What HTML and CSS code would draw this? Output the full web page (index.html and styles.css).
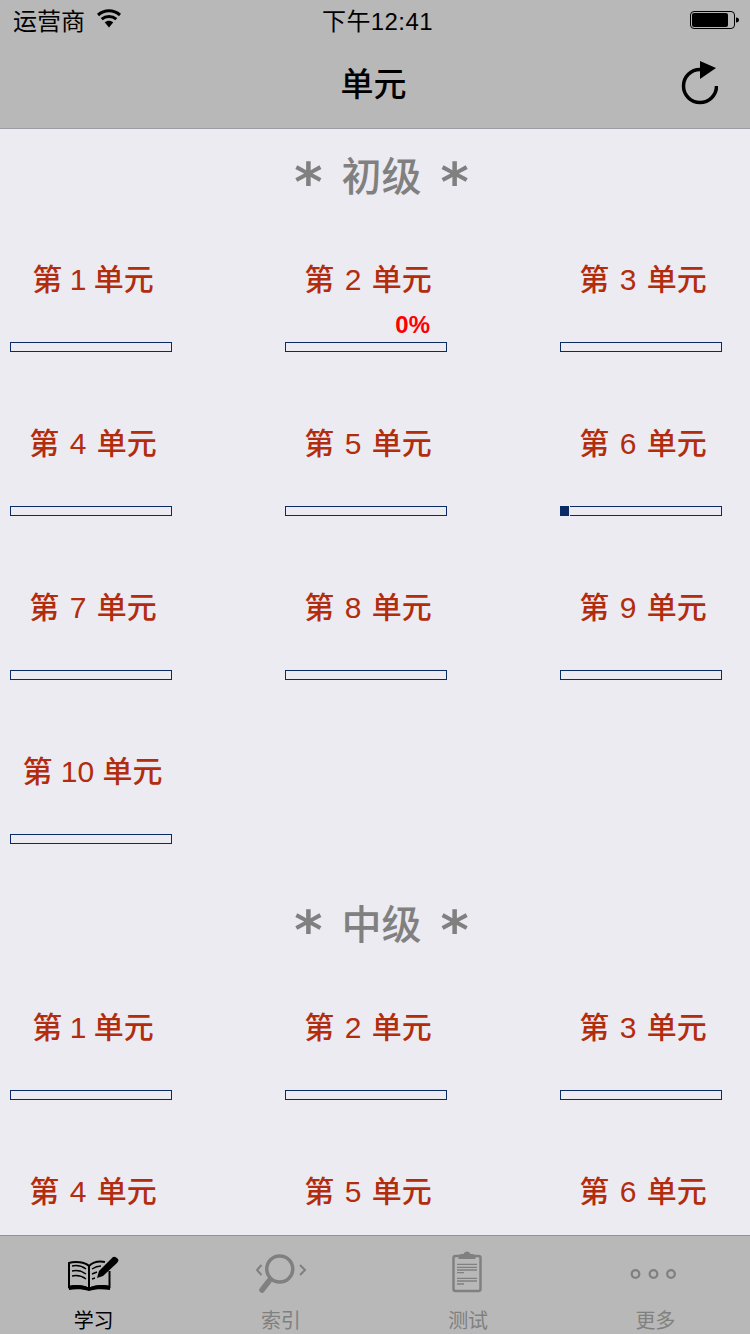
FILE: index.html
```html
<!DOCTYPE html>
<html lang="zh">
<head>
<meta charset="utf-8">
<title>单元</title>
<link rel="stylesheet" href="styles.css">
</head>
<body>
<div class="app">
  <header class="topbar">
    <div class="status">
      <div class="status-left">
        <span>运营商</span>
        <svg class="wifi" width="26" height="20" viewBox="0 0 26 20"><path d="M13 18.500 8.700 13.200c2.500-2.100 6.100-2.100 8.600 0z" fill="#000"/><path d="M5.700 10.100c4.200-3.600 10.400-3.600 14.600 0M2 6c6.400-5.600 15.600-5.600 22 0" fill="none" stroke="#000" stroke-width="3"/></svg>
      </div>
      <div class="status-time">下午12:41</div>
      <div class="status-right">
        <svg width="50" height="20" viewBox="0 0 50 20"><rect x="0.500" y="1.500" width="44" height="17" rx="3.500" fill="none" stroke="#000"/><rect x="2" y="3" width="36" height="14" rx="2" fill="#000"/><path d="M46 7.500c2 0 3 1 3 2.500s-1 2.500-3 2.500z" fill="#000"/></svg>
      </div>
    </div>
    <div class="nav">
      <h1 class="nav-title">单元</h1>
      <svg class="refresh" width="38" height="46" viewBox="0 0 38 46"><path d="M20 9.500A16.500 16.500 0 1 0 36.500 26" fill="none" stroke="#000" stroke-width="3.500"/><path d="M20 1 36 8 20 19z" fill="#000"/></svg>
    </div>
  </header>

  <main class="content">
    <section class="section first">
      <h2 class="section-title"><span class="star">*</span> 初级 <span class="star">*</span></h2>
      <div class="grid">
        <div class="cell"><div class="label one">第 1 单元</div><div class="bar"></div></div>
        <div class="cell"><div class="label">第 2 单元</div><div class="percent">0%</div><div class="bar"></div></div>
        <div class="cell"><div class="label">第 3 单元</div><div class="bar"></div></div>
        <div class="cell"><div class="label">第 4 单元</div><div class="bar"></div></div>
        <div class="cell"><div class="label">第 5 单元</div><div class="bar"></div></div>
        <div class="cell"><div class="label">第 6 单元</div><div class="bar"><div class="fill"></div></div></div>
        <div class="cell"><div class="label">第 7 单元</div><div class="bar"></div></div>
        <div class="cell"><div class="label">第 8 单元</div><div class="bar"></div></div>
        <div class="cell"><div class="label">第 9 单元</div><div class="bar"></div></div>
        <div class="cell"><div class="label ten">第 10 单元</div><div class="bar"></div></div>
      </div>
    </section>
    <section class="section">
      <h2 class="section-title"><span class="star">*</span> 中级 <span class="star">*</span></h2>
      <div class="grid">
        <div class="cell"><div class="label one">第 1 单元</div><div class="bar"></div></div>
        <div class="cell"><div class="label">第 2 单元</div><div class="bar"></div></div>
        <div class="cell"><div class="label">第 3 单元</div><div class="bar"></div></div>
        <div class="cell"><div class="label">第 4 单元</div><div class="bar"></div></div>
        <div class="cell"><div class="label">第 5 单元</div><div class="bar"></div></div>
        <div class="cell"><div class="label">第 6 单元</div><div class="bar"></div></div>
      </div>
    </section>
  </main>

  <nav class="tabbar">
    <div class="tab active">
      <svg width="54" height="42" viewBox="0 0 54 42"><g fill="none" stroke="#000"><path d="M22 13C18 9 8 8 2 10V34C8 32 18 33 22 36 26 33 36 32 42.500 34V18M22 13C26 9 32 8 38 9" stroke-width="2"/><path d="M22 13v23" stroke-width="2"/><path d="M5 13c5-1 10 0 14 3M5 18c5-1 10 0 14 3M5 23c5-1 10 0 14 3M25 16c3-2 6-3 9-3M25 21l5-2M25 26l3-1" stroke-width="1.500"/></g><path d="M2 33c7-2 16-1 20 2 4-3 14-4 21-2v4c-7-1-15-1-21 1-6-2-14-2-20-1z" fill="#000"/><path d="M30 25 32 18 46 4q2-1 5 2 1 2-1 4L36 23z" fill="#000"/></svg>
      <span>学习</span>
    </div>
    <div class="tab">
      <svg width="54" height="42" viewBox="0 0 54 42"><g fill="none" stroke="#808080"><circle cx="25.750" cy="16" r="13" stroke-width="3.500"/><path d="M15 28 8 37" stroke-width="5.500" stroke-linecap="round"/><path d="M7.500 12 3 17l4.500 5M46 12l5 5-5 5" stroke-width="2"/></g></svg>
      <span>索引</span>
    </div>
    <div class="tab">
      <svg width="54" height="42" viewBox="0 0 54 42"><rect x="12.500" y="3" width="27" height="35" rx="2" fill="none" stroke="#808080" stroke-width="2.500"/><path d="M17.500 6V3c0-1.500 2-2 5-2 1-3.500 6-3.500 7 0 3 0 5 .5 5 2v3z" fill="#808080"/><path d="M16 11.300h20M16 14.300h20M16 17h20M16 19.700h7M16 25.300h20M16 28h20M16 31h7" stroke="#808080" stroke-width="1.300"/></svg>
      <span>测试</span>
    </div>
    <div class="tab">
      <svg width="54" height="42" viewBox="0 0 54 42"><g fill="none" stroke="#808080" stroke-width="2.300"><circle cx="7.500" cy="21" r="3.800"/><circle cx="25.500" cy="21" r="3.800"/><circle cx="43" cy="21" r="3.800"/></g></svg>
      <span>更多</span>
    </div>
  </nav>
</div>
</body>
</html>
```

FILE: styles.css
```css
* { box-sizing: border-box; }
html, body { margin: 0; padding: 0; }
body {
  font-family: "Liberation Sans", "Noto Sans CJK SC", sans-serif;
  background: #ecebf2;
}
.app {
  width: 750px;
  height: 1334px;
  display: flex;
  flex-direction: column;
  overflow: hidden;
}
.topbar {
  height: 129px;
  flex: none;
  background: #b8b8b8;
  border-bottom: 1px solid #9d9ca6;
  display: flex;
  flex-direction: column;
}
.status {
  height: 40px;
  padding: 0 10px 2px 13px;
  display: grid;
  grid-template-columns: 1fr auto 1fr;
  align-items: center;
  font-size: 24px;
  color: #000;
}
.status-left { display: flex; align-items: center; gap: 11px; }
.status-time { font-size: 24px; letter-spacing: 0.4px; padding-left: 2px; }
.status-right { display: flex; justify-content: flex-end; padding-top: 2px; }
.nav {
  flex: 1;
  display: flex;
  align-items: center;
  justify-content: center;
  position: relative;
}
.nav-title {
  margin: 2px 3px 0 0;
  font-size: 33px;
  font-weight: 500;
  line-height: 44px;
  color: #000;
}
.refresh { position: absolute; right: 32px; top: 20px; }
.content { flex: 1; min-height: 0; overflow: hidden; }
.section { padding-top: 50px; }
.section.first { padding-top: 27px; }
.section-title {
  margin: 0;
  height: 42px;
  display: flex;
  align-items: center;
  justify-content: center;
  gap: 19px;
  font-size: 40px;
  font-weight: 500;
  line-height: 36px;
  color: #808080;
  padding-left: 13px;
}
.star {
  font-family: "DejaVu Sans", sans-serif;
  font-weight: 700;
  font-size: 54px;
  line-height: 42px;
  position: relative;
  top: 6px;
}
.grid {
  display: grid;
  grid-template-columns: repeat(3, 162px);
  column-gap: 113px;
  padding-left: 10px;
}
.cell {
  height: 164px;
  padding-top: 60px;
  position: relative;
}
.label {
  height: 44px;
  line-height: 44px;
  font-size: 30px;
  font-weight: 500;
  color: #b22c0e;
  text-align: center;
  white-space: nowrap;
  padding-left: 4px;
  word-spacing: 2px;
}
.label.one { word-spacing: -1px; }
.label.ten { word-spacing: 0; padding-left: 3px; }
.percent {
  position: absolute;
  right: 17px;
  top: 113px;
  font-size: 24px;
  line-height: 28px;
  font-weight: 700;
  color: #ff0000;
}
.bar {
  margin-top: 40px;
  height: 10px;
  border: 1px solid #0a2a66;
  position: relative;
}
.fill {
  position: absolute;
  left: -1px;
  top: -1px;
  width: 9px;
  height: 10px;
  background: #0a2a66;
  border-right: 1px solid #ecebf2;
  box-sizing: content-box;
}
.tabbar {
  height: 99px;
  flex: none;
  background: #b8b8b8;
  border-top: 1px solid #929299;
  padding-right: 1px;
  display: flex;
}
.tab {
  flex: 1;
  display: flex;
  flex-direction: column;
  align-items: center;
  color: #808080;
  font-size: 20px;
  line-height: 24px;
  padding-top: 17px;
}
.tab svg { flex: none; overflow: visible; }
.tab span { margin-top: 14px; }
.tab.active { color: #000; }
```
